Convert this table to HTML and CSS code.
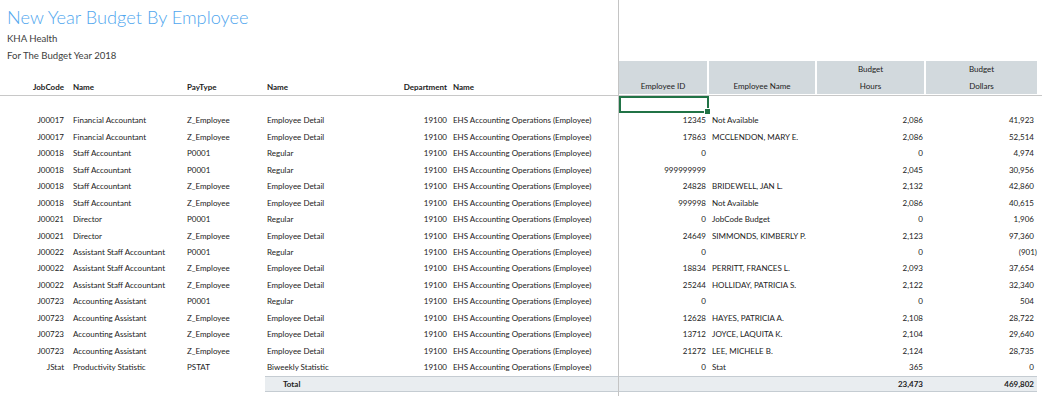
FILE: index.html
```html
<!DOCTYPE html>
<html lang="en">
<head>
  <meta charset="UTF-8" />
  <title>New Year Budget By Employee</title>
  <link rel="stylesheet" href="styles.css">
</head>
<body>
  <div class="sheet">

    <!-- frozen pane: job / pay type / department -->
    <section class="pane pane-fixed">
      <div class="pane-head">
        <div class="report-title">
          <h1>New Year Budget By Employee</h1>
          <p>KHA Health</p>
          <p>For The Budget Year 2018</p>
        </div>
        <div class="row col-heads">
          <span class="num">JobCode</span><span>Name</span><span>PayType</span><span>Name</span><span class="num">Department</span><span>Name</span>
        </div>
      </div>
      <div class="row blank"></div>
      <div class="row"><span class="num">J00017</span><span>Financial Accountant</span><span>Z_Employee</span><span>Employee Detail</span><span class="num">19100</span><span>EHS Accounting Operations (Employee)</span></div>
      <div class="row"><span class="num">J00017</span><span>Financial Accountant</span><span>Z_Employee</span><span>Employee Detail</span><span class="num">19100</span><span>EHS Accounting Operations (Employee)</span></div>
      <div class="row"><span class="num">J00018</span><span>Staff Accountant</span><span>P0001</span><span>Regular</span><span class="num">19100</span><span>EHS Accounting Operations (Employee)</span></div>
      <div class="row"><span class="num">J00018</span><span>Staff Accountant</span><span>P0001</span><span>Regular</span><span class="num">19100</span><span>EHS Accounting Operations (Employee)</span></div>
      <div class="row"><span class="num">J00018</span><span>Staff Accountant</span><span>Z_Employee</span><span>Employee Detail</span><span class="num">19100</span><span>EHS Accounting Operations (Employee)</span></div>
      <div class="row"><span class="num">J00018</span><span>Staff Accountant</span><span>Z_Employee</span><span>Employee Detail</span><span class="num">19100</span><span>EHS Accounting Operations (Employee)</span></div>
      <div class="row"><span class="num">J00021</span><span>Director</span><span>P0001</span><span>Regular</span><span class="num">19100</span><span>EHS Accounting Operations (Employee)</span></div>
      <div class="row"><span class="num">J00021</span><span>Director</span><span>Z_Employee</span><span>Employee Detail</span><span class="num">19100</span><span>EHS Accounting Operations (Employee)</span></div>
      <div class="row"><span class="num">J00022</span><span>Assistant Staff Accountant</span><span>P0001</span><span>Regular</span><span class="num">19100</span><span>EHS Accounting Operations (Employee)</span></div>
      <div class="row"><span class="num">J00022</span><span>Assistant Staff Accountant</span><span>Z_Employee</span><span>Employee Detail</span><span class="num">19100</span><span>EHS Accounting Operations (Employee)</span></div>
      <div class="row"><span class="num">J00022</span><span>Assistant Staff Accountant</span><span>Z_Employee</span><span>Employee Detail</span><span class="num">19100</span><span>EHS Accounting Operations (Employee)</span></div>
      <div class="row"><span class="num">J00723</span><span>Accounting Assistant</span><span>P0001</span><span>Regular</span><span class="num">19100</span><span>EHS Accounting Operations (Employee)</span></div>
      <div class="row"><span class="num">J00723</span><span>Accounting Assistant</span><span>Z_Employee</span><span>Employee Detail</span><span class="num">19100</span><span>EHS Accounting Operations (Employee)</span></div>
      <div class="row"><span class="num">J00723</span><span>Accounting Assistant</span><span>Z_Employee</span><span>Employee Detail</span><span class="num">19100</span><span>EHS Accounting Operations (Employee)</span></div>
      <div class="row"><span class="num">J00723</span><span>Accounting Assistant</span><span>Z_Employee</span><span>Employee Detail</span><span class="num">19100</span><span>EHS Accounting Operations (Employee)</span></div>
      <div class="row"><span class="num">JStat</span><span>Productivity Statistic</span><span>PSTAT</span><span>Biweekly Statistic</span><span class="num">19100</span><span>EHS Accounting Operations (Employee)</span></div>
      <div class="row total">
        <span></span><span></span><span></span><span class="total-label">Total</span>
      </div>
    </section>

    <!-- scrolling pane: employee budget -->
    <section class="pane pane-scroll">
      <div class="pane-head">
        <div class="row col-heads boxed">
          <span>Employee ID</span><span>Employee Name</span><span>Budget<br>Hours</span><span>Budget<br>Dollars</span>
        </div>
      </div>
      <div class="row blank"><span class="selected"></span></div>
      <div class="row"><span class="num">12345</span><span>Not Available</span><span class="num">2,086</span><span class="num">41,923</span></div>
      <div class="row"><span class="num">17863</span><span>MCCLENDON, MARY E.</span><span class="num">2,086</span><span class="num">52,514</span></div>
      <div class="row"><span class="num">0</span><span></span><span class="num">0</span><span class="num">4,974</span></div>
      <div class="row"><span class="num">999999999</span><span></span><span class="num">2,045</span><span class="num">30,956</span></div>
      <div class="row"><span class="num">24828</span><span>BRIDEWELL, JAN L.</span><span class="num">2,132</span><span class="num">42,860</span></div>
      <div class="row"><span class="num">999998</span><span>Not Available</span><span class="num">2,086</span><span class="num">40,615</span></div>
      <div class="row"><span class="num">0</span><span>JobCode Budget</span><span class="num">0</span><span class="num">1,906</span></div>
      <div class="row"><span class="num">24649</span><span>SIMMONDS, KIMBERLY P.</span><span class="num">2,123</span><span class="num">97,360</span></div>
      <div class="row"><span class="num">0</span><span></span><span class="num">0</span><span class="num neg">(901)</span></div>
      <div class="row"><span class="num">18834</span><span>PERRITT, FRANCES L.</span><span class="num">2,093</span><span class="num">37,654</span></div>
      <div class="row"><span class="num">25244</span><span>HOLLIDAY, PATRICIA S.</span><span class="num">2,122</span><span class="num">32,340</span></div>
      <div class="row"><span class="num">0</span><span></span><span class="num">0</span><span class="num">504</span></div>
      <div class="row"><span class="num">12628</span><span>HAYES, PATRICIA A.</span><span class="num">2,108</span><span class="num">28,722</span></div>
      <div class="row"><span class="num">13712</span><span>JOYCE, LAQUITA K.</span><span class="num">2,104</span><span class="num">29,640</span></div>
      <div class="row"><span class="num">21272</span><span>LEE, MICHELE B.</span><span class="num">2,124</span><span class="num">28,735</span></div>
      <div class="row"><span class="num">0</span><span>Stat</span><span class="num">365</span><span class="num">0</span></div>
      <div class="row total"><span></span><span></span><span class="num">23,473</span><span class="num">469,802</span></div>
    </section>

  </div>
</body>
</html>
```

FILE: styles.css
```css
* {
  margin: 0;
  padding: 0;
  box-sizing: border-box;
}

body {
  background: #fff;
  font-family: Lato, "Liberation Sans", sans-serif;
  font-size: 8px;
  color: #222;
}

.sheet {
  display: flex;
  height: 100vh;
  overflow: hidden;
}

.pane-fixed {
  width: 619px;
  border-right: 1px solid #c4c4c4;
}

.pane-scroll {
  width: 423px;
}

.pane-head {
  height: 96px;
  border-bottom: 1px solid #c8c8c8;
  display: flex;
  flex-direction: column;
  justify-content: space-between;
}

.pane-scroll .pane-head {
  justify-content: flex-end;
}

.report-title {
  padding: 5px 0 0 7px;
}

.report-title h1 {
  font-size: 18.2px;
  font-weight: 300;
  line-height: 25px;
  color: #4fa6ee;
}

.report-title p {
  font-size: 9.6px;
  line-height: 17px;
  color: #404040;
}

.row {
  display: grid;
  height: 16.47px;
  align-items: center;
  white-space: nowrap;
}

.pane-fixed .row {
  grid-template-columns: 70px 115px 80px 100px 85px 168px;
}

.pane-scroll .row {
  grid-template-columns: 90px 108px 109px 111px;
}

.row span {
  padding: 0 3px;
  overflow: visible;
}

.pane-fixed .row span:first-child {
  padding-right: 6px;
}

.pane-fixed .row span:nth-child(3),
.pane-fixed .row span:nth-child(4) {
  padding-left: 2px;
}

.row .num {
  text-align: right;
}

.row .neg {
  margin-right: -3px;
}

.col-heads {
  font-weight: bold;
  color: #222;
}

.pane-fixed .col-heads {
  height: 17px;
}

.pane-head .boxed {
  height: 33px;
  margin-bottom: 1px;
  font-weight: normal;
  align-items: stretch;
}

.boxed span {
  background: #d2d9dd;
  margin-right: 2px;
  display: flex;
  align-items: flex-end;
  justify-content: center;
  text-align: center;
  line-height: 16.5px;
  padding: 0;
}

.boxed span:last-child {
  margin-right: 0;
}

.row.blank {
  height: 16px;
}

.selected {
  position: relative;
  height: 17px;
  border: 2px solid #217346;
  align-self: start;
}

.selected::after {
  content: "";
  position: absolute;
  right: -4px;
  bottom: -4px;
  width: 5px;
  height: 5px;
  background: #217346;
  border: 1px solid #fff;
}

.row.total {
  font-weight: bold;
  color: #222;
}

.row.total span {
  height: 100%;
  display: flex;
  align-items: center;
  justify-content: flex-end;
  background: #e9edf0;
  border-top: 1px solid #c5ccd2;
  border-bottom: 1px solid #c5ccd2;
}

.pane-fixed .row.total span:nth-child(-n+3) {
  background: none;
  border: none;
}

.pane-fixed .row.total .total-label {
  grid-column: 4 / 7;
  justify-content: flex-start;
  padding-left: 18px;
}
```
